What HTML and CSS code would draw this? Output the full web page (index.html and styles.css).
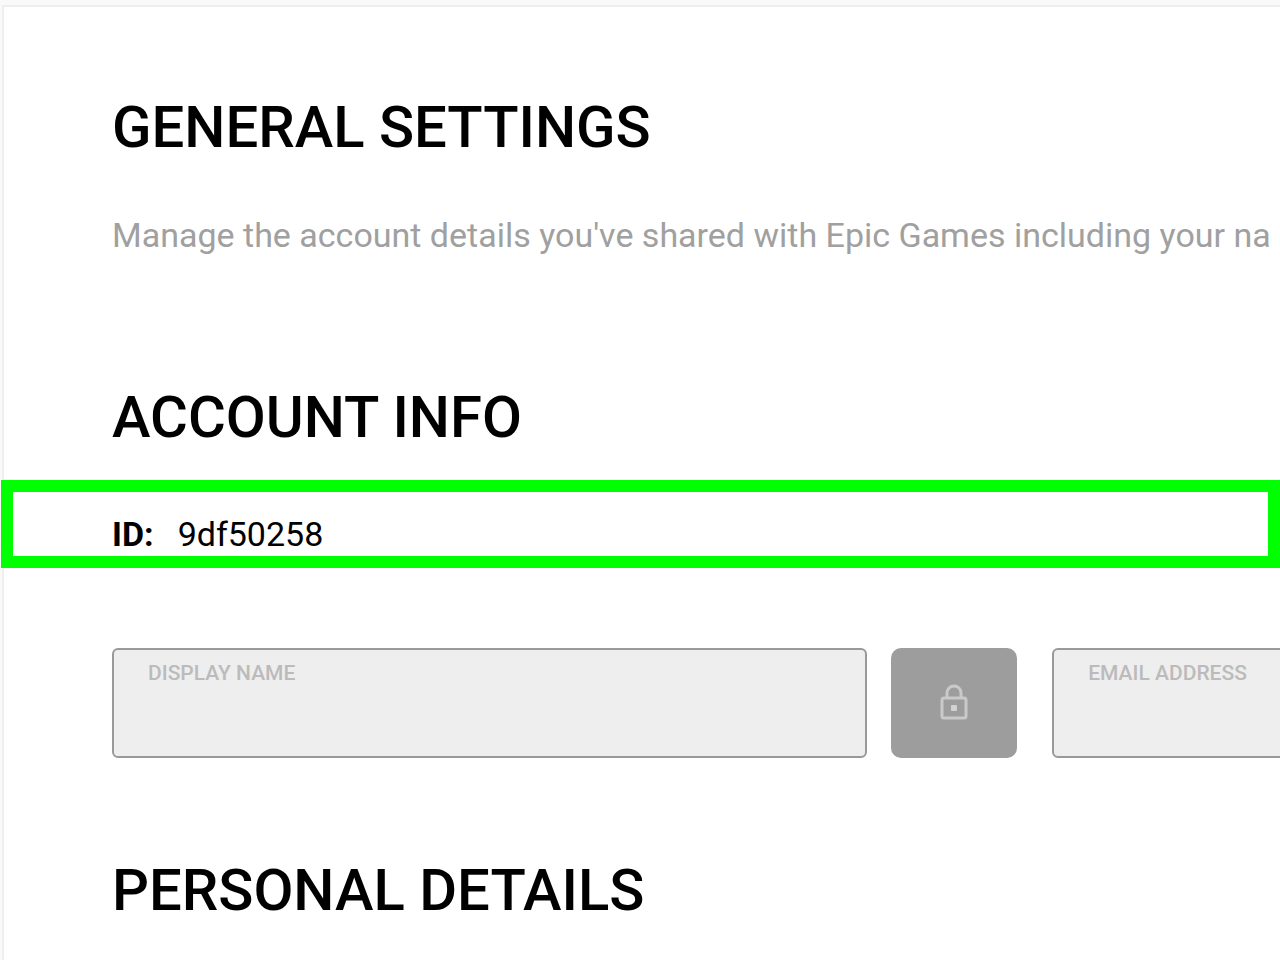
FILE: index.html
```html
<!DOCTYPE html>
<html lang="en">
<head>
  <meta charset="UTF-8">
  <meta name="viewport" content="width=device-width, initial-scale=1">
  <title>General Settings</title>
  <link rel="stylesheet" href="styles.css">
</head>
<body>
  <main class="panel">
    <h1>GENERAL SETTINGS</h1>
    <p class="intro">Manage the account details you've shared with Epic Games including your na</p>

    <h2>ACCOUNT INFO</h2>
    <div class="account-id">
      <strong>ID:</strong>
      <span>9df50258</span>
    </div>

    <form class="fields">
      <div class="field">
        <label for="displayName">DISPLAY NAME</label>
        <input type="text" id="displayName" disabled>
      </div>
      <button type="button" class="lock-btn" aria-label="Edit display name">
        <svg viewBox="0 0 28 38" width="28" height="38" fill="none" stroke="#c9c9c9" stroke-width="3">
          <rect x="2" y="14" width="24" height="20" rx="2"/>
          <path d="M7 14V9a7 7 0 0 1 14 0v5"/>
          <rect x="11" y="21" width="6" height="6" rx="1" fill="#d2d2d2" stroke="none"/>
        </svg>
      </button>
      <div class="field">
        <label for="email">EMAIL ADDRESS</label>
        <input type="email" id="email" disabled>
      </div>
    </form>

    <h2>PERSONAL DETAILS</h2>
  </main>
</body>
</html>
```

FILE: styles.css
```css
* {
  box-sizing: border-box;
}
body {
  margin: 0;
  padding: 5px 0 0 2px;
  font-family: Roboto, Arial, sans-serif;
  font-size: 34px;
  color: #000;
  background-color: #f9f9f9;
  overflow: hidden;
}
.panel {
  min-height: 100vh;
  padding: 84px 0 0 108px;
  background-color: #fff;
  border-top: 2px solid #eee;
  border-left: 2px solid #eee;
}
h1, h2 {
  margin: 0;
  font-size: 58px;
  line-height: 72px;
  font-weight: 500;
}
.intro {
  margin: 52px 0 126px;
  line-height: 40px;
  color: #a0a0a0;
  white-space: nowrap;
}
/* highlighted row runs past the panel padding */
.account-id {
  display: flex;
  gap: 24px;
  margin: 27px 0 80px -111px;
  padding: 22px 0 2px 99px;
  line-height: 40px;
  border: 12px solid #0f0;
}
.fields {
  display: flex;
  margin-bottom: 96px;
  overflow: hidden;
}
.field {
  flex: 0 0 59vw;
  display: flex;
  flex-direction: column;
  height: 110px;
  padding: 10px 34px;
  background-color: #eee;
  border: 2px solid #999;
  border-radius: 6px;
}
.field label {
  font-size: 21px;
  line-height: 26px;
  font-weight: 500;
  color: #bbb;
}
.field input {
  flex: 1;
  width: 100%;
  padding: 0;
  font: inherit;
  background: none;
  border: none;
}
.lock-btn {
  flex: none;
  display: flex;
  align-items: center;
  justify-content: center;
  width: 126px;
  margin: 0 35px 0 24px;
  background-color: #9d9d9d;
  border: none;
  border-radius: 10px;
  cursor: pointer;
}
```
